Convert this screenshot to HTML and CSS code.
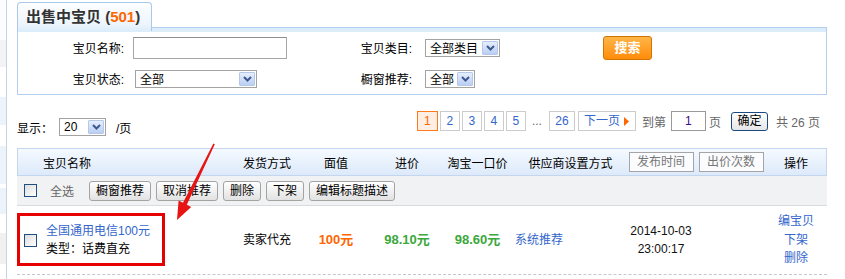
FILE: index.html
```html
<!DOCTYPE html>
<html lang="zh-CN">
<head>
    <meta charset="UTF-8">
    <title>出售中宝贝</title>
    <link rel="stylesheet" href="styles.css">
</head>
<body>
<div class="page">
    <div class="side"></div>
    <div class="main">
        <div class="tab">出售中宝贝 (<span class="tab-num">501</span>)</div>
        <div class="search">
            <div class="srow">
                <span class="lbl">宝贝名称:</span>
                <span class="cell"><span class="input input-name"></span></span>
                <span class="lbl">宝贝类目:</span>
                <span class="cell cell-r"><span class="sel sel-cat">全部类目<i class="arr"><svg width="9" height="6" viewBox="0 0 9 6"><path d="M1 1l3.5 3.5L8 1" fill="none" stroke="#3d5990" stroke-width="2"/></svg></i></span></span>
                <span class="cell"><span class="btn-search">搜索</span></span>
            </div>
            <div class="srow">
                <span class="lbl">宝贝状态:</span>
                <span class="cell"><span class="sel sel-status">全部<i class="arr"><svg width="9" height="6" viewBox="0 0 9 6"><path d="M1 1l3.5 3.5L8 1" fill="none" stroke="#3d5990" stroke-width="2"/></svg></i></span></span>
                <span class="lbl">橱窗推荐:</span>
                <span class="cell cell-r"><span class="sel sel-win">全部<i class="arr"><svg width="9" height="6" viewBox="0 0 9 6"><path d="M1 1l3.5 3.5L8 1" fill="none" stroke="#3d5990" stroke-width="2"/></svg></i></span></span>
            </div>
        </div>

        <div class="pager-row">
            <div class="show">
                显示：<span class="sel sel-num">20<i class="arr"><svg width="9" height="6" viewBox="0 0 9 6"><path d="M1 1l3.5 3.5L8 1" fill="none" stroke="#3d5990" stroke-width="2"/></svg></i></span><span class="per">/页</span>
            </div>
            <div class="pager">
                <span class="pg pg-on">1</span>
                <span class="pg">2</span>
                <span class="pg">3</span>
                <span class="pg">4</span>
                <span class="pg">5</span>
                <span class="dots">...</span>
                <span class="pg pg-last">26</span>
                <span class="pg pg-next">下一页<svg width="5" height="9" viewBox="0 0 5 9"><polygon points="0,0 5,4.5 0,9" fill="#ff6600"/></svg></span>
                <span class="goto">到第</span>
                <span class="pg-input">1</span>
                <span class="unit">页</span>
                <span class="btn-ok">确定</span>
                <span class="total">共 26 页</span>
            </div>
        </div>

        <div class="table">
            <div class="thead">
                <span></span>
                <span class="th-left">宝贝名称</span>
                <span>发货方式</span>
                <span>面值</span>
                <span>进价</span>
                <span>淘宝一口价</span>
                <span>供应商设置方式</span>
                <span><span class="sort">发布时间</span></span>
                <span><span class="sort">出价次数</span></span>
                <span>操作</span>
            </div>
            <div class="toolbar">
                <span class="chk"></span>
                <span class="all">全选</span>
                <span class="btn">橱窗推荐</span>
                <span class="btn">取消推荐</span>
                <span class="btn">删除</span>
                <span class="btn">下架</span>
                <span class="btn">编辑标题描述</span>
            </div>
            <div class="trow">
                <span class="td-chk"><span class="chk"></span></span>
                <span class="td-name">
                    <a class="link">全国通用电信100元</a><br>
                    类型：话费直充
                </span>
                <span>卖家代充</span>
                <span class="price-face">100元</span>
                <span class="price">98.10元</span>
                <span class="price">98.60元</span>
                <span class="td-left"><a class="link">系统推荐</a></span>
                <span class="date">2014-10-03<br>23:00:17</span>
                <span></span>
                <span class="ops"><a class="link">编宝贝</a><br><a class="link">下架</a><br><a class="link">删除</a></span>
            </div>
        </div>
    </div>

    <div class="mark"></div>
    <svg class="arrow" width="845" height="279" viewBox="0 0 845 279">
        <polygon points="213.4,143.6 214.8,144.3 186.8,204.8 191.2,207 177,220 178.6,200.6 183,202.8" fill="#e81414"/>
    </svg>
</div>
</body>
</html>
```

FILE: styles.css
```css
body {
    margin: 0;
    font-family: "Liberation Sans", "Noto Sans CJK SC", sans-serif;
    font-size: 12px;
    color: #000;
    background: #fff;
}
.page {
    position: relative;
    display: flex;
    height: 279px;
    overflow: hidden;
}
.side {
    width: 6px;
    border-right: 1px solid #c5d4e6;
    background: linear-gradient(#fbfcfe 0 40px, #f1f3f6 40px 67px, #fff 67px 97px, #edf3fa 97px 125px,
        #fff 125px 146px, #edf3fa 146px 184px, #fff 184px 188px, #edf3fa 188px 214px,
        #fff 214px 233px, #f1f1f1 233px 264px, #fff 264px);
}
.main {
    margin-left: 10px;
    width: 810px;
    padding-top: 2px;
}

/* tab + search */
.tab {
    position: relative;
    z-index: 1;
    box-sizing: border-box;
    width: 135px;
    height: 29px;
    margin-bottom: -4px;
    padding: 5px 0 0 8px;
    border: 1px solid #a9c8ea;
    border-bottom: none;
    border-radius: 4px 4px 0 0;
    background: linear-gradient(#fdfeff, #edf5fc 75%, #dcedfa);
    font-size: 15px;
    font-weight: bold;
    line-height: 17px;
    color: #333;
}
.tab-num {
    color: #ff6600;
}
.search {
    border: 1px solid #b3cef0;
    padding-top: 4px;
    background: linear-gradient(#dcedfa 0 4px, #fff 4px);
}
.srow {
    display: grid;
    grid-template-columns: 106px 234px 54px 191px 60px;
    height: 31px;
    align-items: center;
}
.lbl {
    text-align: right;
}
.cell {
    display: flex;
    align-items: center;
}
.input {
    box-sizing: border-box;
    width: 154px;
    height: 22px;
    border: 1px solid #a6a6a6;
    border-top-color: #8e8e8e;
}
.input-name {
    margin-left: 9px;
}
.sel {
    display: inline-flex;
    align-items: center;
    justify-content: space-between;
    box-sizing: border-box;
    height: 18px;
    padding-left: 4px;
    border: 1px solid #a3a3a3;
    background: #fff;
}
.arr {
    display: flex;
    align-items: center;
    justify-content: center;
    box-sizing: border-box;
    width: 16px;
    height: 14px;
    margin-right: 1px;
    border: 1px solid #b6c8ea;
    border-radius: 1px;
    background: linear-gradient(#e6eefc, #bacff3);
}
.sel-cat {
    width: 75px;
    margin-left: 13px;
}
.sel-status {
    width: 122px;
    margin-left: 11px;
}
.sel-win {
    width: 50px;
    margin-left: 13px;
}
.btn-search {
    box-sizing: border-box;
    width: 49px;
    height: 24px;
    border: 1px solid #d27400;
    border-radius: 3px;
    background: linear-gradient(#ffb548, #ff8c0a);
    color: #fff;
    font-size: 13px;
    font-weight: bold;
    line-height: 22px;
    text-align: center;
}

/* pager */
.pager-row {
    display: flex;
    height: 25px;
    margin-top: 16px;
}
.show {
    display: flex;
    align-items: center;
    height: 18px;
    margin-top: 7px;
}
.sel-num {
    width: 47px;
    margin-left: 6px;
}
.per {
    margin-left: 10px;
}
.pager {
    display: flex;
    align-items: center;
    height: 20px;
    margin-left: auto;
    margin-right: 7px;
}
.pg {
    box-sizing: border-box;
    width: 20px;
    height: 20px;
    margin-right: 2px;
    border: 1px solid #ccc;
    color: #3366cc;
    line-height: 18px;
    text-align: center;
}
.pg-on {
    border-color: #ff7a1a;
    background: #ffeee4;
    color: #ff6600;
    width: 21px;
}
.dots {
    width: 12px;
    margin: 0 5px 0 4px;
    color: #666;
}
.pg-last {
    width: 26px;
}
.pg-next {
    display: flex;
    align-items: center;
    gap: 4px;
    width: 58px;
    margin-left: 1px;
    padding-left: 5px;
}
.goto {
    margin-left: 4px;
    color: #666;
}
.pg-input {
    box-sizing: border-box;
    width: 35px;
    height: 20px;
    margin-left: 5px;
    border: 1px solid #999;
    color: #3a0a8c;
    line-height: 18px;
    text-align: center;
}
.unit {
    margin-left: 3px;
    color: #666;
}
.btn-ok {
    box-sizing: border-box;
    width: 37px;
    height: 19px;
    margin-left: 10px;
    border: 1px solid #1c4a80;
    border-radius: 3px;
    background: linear-gradient(#fff, #e6e6e6);
    line-height: 17px;
    text-align: center;
}
.total {
    margin-left: 8px;
    color: #666;
}

/* table */
.table {
    margin-top: 12px;
}
.thead,
.trow {
    display: grid;
    grid-template-columns: 26px 193px 62px 76px 66px 75px 111px 70px 70px 60px;
    align-items: center;
    text-align: center;
}
.thead {
    height: 28px;
    box-shadow: inset 0 0 0 1px #c3d6ee;
    background: linear-gradient(#f5faff, #dce9fa);
}
.th-left {
    text-align: left;
}
.sort {
    display: inline-block;
    box-sizing: border-box;
    width: 65px;
    height: 20px;
    border: 1px solid #a5a5a5;
    background: #fbfcfe;
    color: #777;
    line-height: 18px;
}
.toolbar {
    display: flex;
    align-items: center;
    height: 29px;
    padding-left: 7px;
    border-bottom: 1px solid #d8dce1;
    background: #f1f2f4;
}
.chk {
    display: block;
    box-sizing: border-box;
    width: 13px;
    height: 13px;
    border: 1px solid #1f4f82;
    background: linear-gradient(135deg, #dcdcdc, #fff);
}
.all {
    margin-left: 13px;
    color: #666;
}
.btn {
    box-sizing: border-box;
    height: 20px;
    margin-left: 5px;
    padding: 0 6px;
    border: 1px solid #a3a3a3;
    border-radius: 3px;
    background: linear-gradient(#fff, #e2e2e2);
    line-height: 18px;
}
.all + .btn {
    margin-left: 15px;
}
.trow {
    height: 68px;
    border-bottom: 1px dashed #c8c8c8;
    line-height: 18px;
}
.td-chk .chk {
    margin-left: 7px;
}
.td-name {
    padding-left: 3px;
    text-align: left;
}
.td-left {
    text-align: left;
}
.link {
    color: #3366cc;
    text-decoration: none;
}
.price-face {
    color: #ff6600;
    font-size: 13px;
    font-weight: bold;
}
.price {
    color: #3aa83a;
    font-size: 13px;
    font-weight: bold;
}
.date {
    color: #111;
}
.ops {
    line-height: 18.5px;
}

/* overlays */
.mark {
    position: absolute;
    left: 17px;
    top: 213px;
    box-sizing: border-box;
    width: 148px;
    height: 53px;
    border: 3px solid #e60000;
}
.arrow {
    position: absolute;
    left: 0;
    top: 0;
    pointer-events: none;
}
```
